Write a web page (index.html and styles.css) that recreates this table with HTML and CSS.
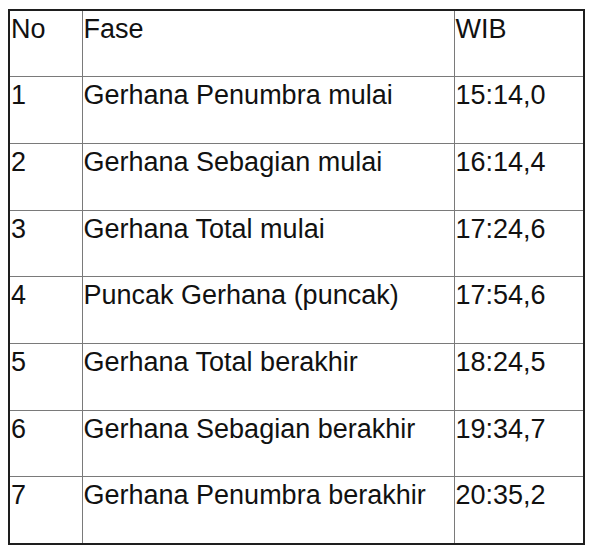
FILE: index.html
```html
<!DOCTYPE html>
<html>
<head>
<meta charset="utf-8">
<link rel="stylesheet" href="styles.css">
</head>
<body>
<table class="phases">
  <colgroup>
    <col class="c-no">
    <col class="c-fase">
    <col class="c-wib">
  </colgroup>
  <tr><td>No</td><td>Fase</td><td>WIB</td></tr>
  <tr><td>1</td><td>Gerhana Penumbra mulai</td><td>15:14,0</td></tr>
  <tr><td>2</td><td>Gerhana Sebagian mulai</td><td>16:14,4</td></tr>
  <tr><td>3</td><td>Gerhana Total mulai</td><td>17:24,6</td></tr>
  <tr><td>4</td><td>Puncak Gerhana (puncak)</td><td>17:54,6</td></tr>
  <tr><td>5</td><td>Gerhana Total berakhir</td><td>18:24,5</td></tr>
  <tr><td>6</td><td>Gerhana Sebagian berakhir</td><td>19:34,7</td></tr>
  <tr><td>7</td><td>Gerhana Penumbra berakhir</td><td>20:35,2</td></tr>
</table>
</body>
</html>
```
FILE: styles.css
```css
html, body {
  margin: 0;
  padding: 0;
  background: #ffffff;
}
body {
  padding: 9px 0 0 8px;
  font-family: "Liberation Sans", Arial, sans-serif;
  color: #111;
}
.phases {
  border-collapse: collapse;
  border: 2px solid #1e1e1e;
  table-layout: fixed;
  width: 577px;
}
.c-no { width: 73px; }
.c-fase { width: 372px; }
.c-wib { width: auto; }
.phases td {
  border: 1px solid #7a7a7a;
  height: 66.7px;
  box-sizing: border-box;
  padding: 3px 0 0 1px;
  vertical-align: top;
  font-size: 27px;
  line-height: 31px;
  white-space: nowrap;
}
.phases tr:first-child td { border-top: 2px solid #1e1e1e; }
.phases tr:last-child td { border-bottom: 2px solid #1e1e1e; }
.phases td:first-child { border-left: 2px solid #1e1e1e; }
.phases td:last-child { border-right: 2px solid #1e1e1e; }
```
